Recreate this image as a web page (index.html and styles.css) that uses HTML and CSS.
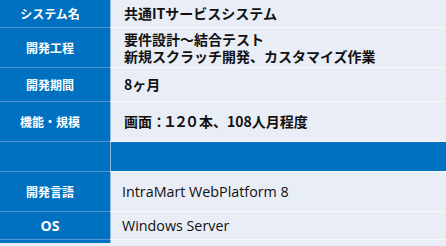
FILE: index.html
```html
<!DOCTYPE html>
<html lang="ja">
<head>
    <meta charset="UTF-8">
    <meta name="viewport" content="width=device-width, initial-scale=1.0">
    <title>プロジェクト概要</title>
    <link rel="stylesheet" href="styles.css">
</head>
<body>
    <div class="spec">
        <div class="spec-row">
            <div class="spec-label">システム名</div>
            <div class="spec-value">共通ITサービスシステム</div>
        </div>
        <div class="spec-row row-tall">
            <div class="spec-label">開発工程</div>
            <div class="spec-value">要件設計～結合テスト<br>新規スクラッチ開発、カスタマイズ作業</div>
        </div>
        <div class="spec-row row-mid">
            <div class="spec-label">開発期間</div>
            <div class="spec-value">8ヶ月</div>
        </div>
        <div class="spec-row row-tall">
            <div class="spec-label">機能・規模</div>
            <div class="spec-value">画面<span class="tight">：１２０</span>本、108人月程度</div>
        </div>
        <!-- section divider row -->
        <div class="spec-row row-band">
            <div class="spec-label"></div>
            <div class="spec-value"></div>
        </div>
        <div class="spec-row row-tall">
            <div class="spec-label">開発言語</div>
            <div class="spec-value plain">IntraMart WebPlatform 8</div>
        </div>
        <div class="spec-row">
            <div class="spec-label latin">OS</div>
            <div class="spec-value plain">Windows Server</div>
        </div>
        <div class="spec-row row-end">
            <div class="spec-label"></div>
            <div class="spec-value"></div>
        </div>
    </div>
</body>
</html>
```

FILE: styles.css
```css
/* Page */
body {
    margin: 0;
    padding: 0;
    background-color: #e9edf6;
    font-family: "Noto Sans CJK JP", "Noto Sans", sans-serif;
}

/* Spec table */
.spec {
    display: flex;
    flex-direction: column;
    width: 446px;
}

.spec-row {
    display: grid;
    grid-template-columns: 110px 1fr;
    column-gap: 1px;
    height: 27px;
    border-bottom: 1px solid #f7f8fc;
    background-color: #8fbce3; /* column divider */
}

.row-tall {
    height: 39px;
}

.row-mid {
    height: 33px;
}

.row-band {
    height: 29px;
}

.row-end {
    height: 3px;
    border-bottom: none;
}

.spec-label {
    display: flex;
    align-items: center;
    justify-content: center;
    padding-right: 10px;
    background-color: #0070c0;
    color: #fff;
    font-size: 12px;
    font-weight: bold;
    box-shadow: 0 1px 0 #4f97d3;
}

.spec-label.latin {
    font-family: "Open Sans", "Noto Sans", sans-serif;
    font-size: 14px;
}

.spec-value {
    display: flex;
    align-items: center;
    padding-left: 13px;
    background-color: #e9edf6;
    color: #111;
    font-size: 14px;
    font-weight: bold;
    line-height: 17px;
}

.spec-value .tight {
    letter-spacing: -3px;
    margin-right: 3px;
}

.spec-value.plain {
    padding-left: 11px;
    font-family: "Open Sans", "Noto Sans", sans-serif;
    font-weight: normal;
    font-size: 14.3px;
}

.row-band .spec-value {
    background-color: #0070c0;
}
```
